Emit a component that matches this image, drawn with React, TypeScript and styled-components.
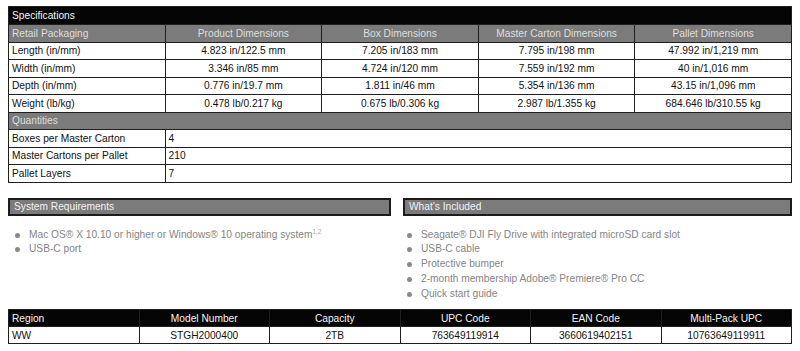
import React from 'react';
import styled, { createGlobalStyle } from 'styled-components';

const Global = createGlobalStyle`
  html, body { margin: 0; padding: 0; background: #fff; }
  body { font-family: "Liberation Sans", Arial, Helvetica, sans-serif; font-size: 10.2px; color: #111; }
`;

const Page = styled.div`
  width: 800px;
  height: 351px;
  box-sizing: border-box;
  padding: 6px 8px 0 8px;
  display: flex;
  flex-direction: column;
`;

const Grid = styled.div<{ $cols: number; $rows: string }>`
  display: grid;
  grid-template-columns: repeat(${p => p.$cols}, 1fr);
  grid-template-rows: ${p => p.$rows};
  gap: 1px;
  padding: 1px;
  background: #1f1f1f;
`;

const Cell = styled.div<{ $align?: 'left' | 'center'; $span?: number; $tone?: 'black' | 'grey' | 'white' }>`
  grid-column: span ${p => p.$span ?? 1};
  display: flex;
  align-items: center;
  justify-content: ${p => (p.$align === 'center' ? 'center' : 'flex-start')};
  padding: 0 3px;
  white-space: nowrap;
  overflow: hidden;
  background: ${p => (p.$tone === 'black' ? '#050505' : p.$tone === 'grey' ? '#7b7b7b' : '#fff')};
  color: ${p => (p.$tone === 'black' ? '#f4f4f4' : p.$tone === 'grey' ? '#dedede' : '#111')};
`;

const Sections = styled.div`
  display: grid;
  grid-template-columns: 383px 389px;
  column-gap: 12px;
  margin-top: 15px;
`;

const Section = styled.div`
  display: flex;
  flex-direction: column;
`;

const SectionBar = styled.div`
  height: 18px;
  box-sizing: border-box;
  border: 2px solid #1c1c1c;
  background: #7b7b7b;
  color: #f2f2f2;
  display: flex;
  align-items: center;
  padding: 0 4px;
`;

const List = styled.ul<{ $indent: number }>`
  list-style: none;
  margin: 12px 0 0 0;
  padding: 0 0 0 ${p => p.$indent}px;
`;

const Item = styled.li`
  position: relative;
  height: 14.75px;
  line-height: 14.75px;
  padding-left: 14px;
  color: #858585;
  white-space: nowrap;
  &::before {
    content: '';
    position: absolute;
    left: 0;
    top: 5px;
    width: 5px;
    height: 5px;
    border-radius: 50%;
    background: #8a8a8a;
  }
`;

const Sup = styled.sup`
  font-size: 6.5px;
  color: #aaa;
  vertical-align: top;
  position: relative;
  top: -3px;
`;

const Bottom = styled.div`
  margin-top: 8px;
`;

const dims = [
  ['Length (in/mm)', '4.823 in/122.5 mm', '7.205 in/183 mm', '7.795 in/198 mm', '47.992 in/1,219 mm'],
  ['Width (in/mm)', '3.346 in/85 mm', '4.724 in/120 mm', '7.559 in/192 mm', '40 in/1,016 mm'],
  ['Depth (in/mm)', '0.776 in/19.7 mm', '1.811 in/46 mm', '5.354 in/136 mm', '43.15 in/1,096 mm'],
  ['Weight (lb/kg)', '0.478 lb/0.217 kg', '0.675 lb/0.306 kg', '2.987 lb/1.355 kg', '684.646 lb/310.55 kg'],
];

const quantities = [
  ['Boxes per Master Carton', '4'],
  ['Master Cartons per Pallet', '210'],
  ['Pallet Layers', '7'],
];

const headers = ['Product Dimensions', 'Box Dimensions', 'Master Carton Dimensions', 'Pallet Dimensions'];

const included = [
  'Seagate® DJI Fly Drive with integrated microSD card slot',
  'USB-C cable',
  'Protective bumper',
  '2-month membership Adobe® Premiere® Pro CC',
  'Quick start guide',
];

const bottomHead = ['Region', 'Model Number', 'Capacity', 'UPC Code', 'EAN Code', 'Multi-Pack UPC'];
const bottomRow = ['WW', 'STGH2000400', '2TB', '763649119914', '3660619402151', '10763649119911'];

export default function App() {
  return (
    <>
      <Global />
      <Page>
        <Grid $cols={5} $rows="17px repeat(9, 16.5px)">
          <Cell $span={5} $tone="black">Specifications</Cell>
          <Cell $tone="grey">Retail Packaging</Cell>
          {headers.map(h => (
            <Cell key={h} $tone="grey" $align="center">{h}</Cell>
          ))}
          {dims.map(row =>
            row.map((v, i) => (
              <Cell key={row[0] + i} $align={i === 0 ? 'left' : 'center'}>{v}</Cell>
            ))
          )}
          <Cell $span={5} $tone="grey">Quantities</Cell>
          {quantities.map(([k, v]) => (
            <React.Fragment key={k}>
              <Cell>{k}</Cell>
              <Cell $span={4}>{v}</Cell>
            </React.Fragment>
          ))}
        </Grid>
        <Sections>
          <Section>
            <SectionBar>System Requirements</SectionBar>
            <List $indent={7}>
              <Item>
                Mac OS® X 10.10 or higher or Windows® 10 operating system<Sup>1,2</Sup>
              </Item>
              <Item>USB-C port</Item>
            </List>
          </Section>
          <Section>
            <SectionBar>What’s Included</SectionBar>
            <List $indent={4}>
              {included.map(t => (
                <Item key={t}>{t}</Item>
              ))}
            </List>
          </Section>
        </Sections>
        <Bottom>
          <Grid $cols={6} $rows="16px 16px">
            {bottomHead.map((h, i) => (
              <Cell key={h} $tone="black" $align={i === 0 ? 'left' : 'center'}>{h}</Cell>
            ))}
            {bottomRow.map((v, i) => (
              <Cell key={v} $align={i === 0 ? 'left' : 'center'}>{v}</Cell>
            ))}
          </Grid>
        </Bottom>
      </Page>
    </>
  );
}
